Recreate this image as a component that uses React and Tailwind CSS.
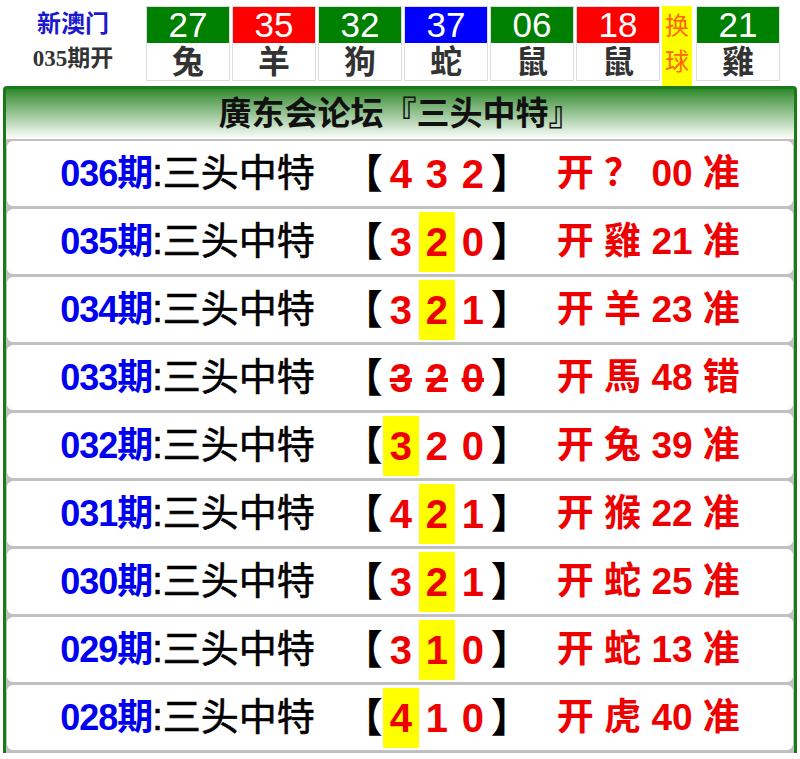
export default function App() {
  const balls = [
    ["27", "兔", "bg-[#008000]"],
    ["35", "羊", "bg-[#ff0000]"],
    ["32", "狗", "bg-[#008000]"],
    ["37", "蛇", "bg-[#0000ff]"],
    ["06", "鼠", "bg-[#008000]"],
    ["18", "鼠", "bg-[#ff0000]"],
  ];
  const rows = [
    ["036", "432", -1, "开 ？ 00 准", false],
    ["035", "320", 1, "开 雞 21 准", false],
    ["034", "321", 1, "开 羊 23 准", false],
    ["033", "320", -1, "开 馬 48 错", true],
    ["032", "320", 0, "开 兔 39 准", false],
    ["031", "421", 1, "开 猴 22 准", false],
    ["030", "321", 1, "开 蛇 25 准", false],
    ["029", "310", 1, "开 蛇 13 准", false],
    ["028", "410", 0, "开 虎 40 准", false],
  ];
  const f = { fontFamily: '"Liberation Sans", "Noto Sans CJK SC", sans-serif' };
  return (
    <div className="w-[800px] h-[759px] bg-white overflow-hidden" style={f}>
      <div className="flex h-[86px] pt-[6px]">
        <div className="w-[146px] flex flex-col items-center">
          <div className="text-[#1a1acc] text-[24px] leading-[32px] font-bold mt-[2px]">新澳门</div>
          <div className="text-[#333] text-[23px] leading-[30px] font-bold mt-[4px]" style={{ fontFamily: '"Liberation Serif", "Noto Sans CJK SC", serif' }}>035期开</div>
        </div>
        <div className="flex gap-[2px]">
          {balls.map(([n, z], i) => (
            <div key={i} className="w-[84px] h-[75px] border border-[#ddd] flex flex-col">
              <div className={`${balls[i][2]} h-[36px] text-white text-[35px] leading-[36px] text-center`}>{n}</div>
              <div className="flex-1 text-[#333] text-[32px] leading-[38px] text-center font-bold">{z}</div>
            </div>
          ))}
          <div className="w-[30px] h-[80px] bg-[#ffff00] text-[#ff6600] text-[24px] leading-[36px] flex flex-col items-center pt-[2px]">
            <span>换</span><span>球</span>
          </div>
          <div className="w-[84px] h-[75px] border border-[#ddd] flex flex-col ml-[2px]">
            <div className="bg-[#008000] h-[36px] text-white text-[35px] leading-[36px] text-center">21</div>
            <div className="flex-1 text-[#333] text-[32px] leading-[38px] text-center font-bold">雞</div>
          </div>
        </div>
      </div>
      <div className="mx-[3px] border-x-[3px] border-t-[3px] border-[#1a7a1a] rounded-t-[4px] bg-[#c0c0c0]">
        <div className="h-[50px] bg-gradient-to-b from-[#2a8a2a] to-white text-center text-[33px] leading-[50px] font-bold text-[#111]">廣东会论坛『三头中特』</div>
        <div className="flex flex-col gap-[3px] pt-[2px] pb-[3px]">
          {rows.map(([p, d, h, r, strike], i) => (
            <div key={i} className="h-[65px] bg-white rounded-[6px] mx-[1px] flex items-center justify-center font-bold">
              <span className="text-[#0000ee] text-[36px] tracking-[-1px]">{p}期</span>
              <span className="text-black text-[38px] font-normal" style={{ WebkitTextStroke: "0.6px black" }}>:三头中特</span>
              <span className="text-black text-[40px] ml-[28px]">【</span>
              <span className={`flex text-[#ee0000] text-[40px] ${strike ? "line-through" : ""}`}>
                {d.split("").map((c, j) => (
                  <span key={j} className={`w-[36px] text-center ${j === h ? "bg-[#ffff00]" : ""}`}>{c}</span>
                ))}
              </span>
              <span className="text-black text-[40px]">】</span>
              <span className="text-[#ee0000] text-[37px] ml-[26px] whitespace-pre">{r}</span>
            </div>
          ))}
        </div>
      </div>
    </div>
  );
}
